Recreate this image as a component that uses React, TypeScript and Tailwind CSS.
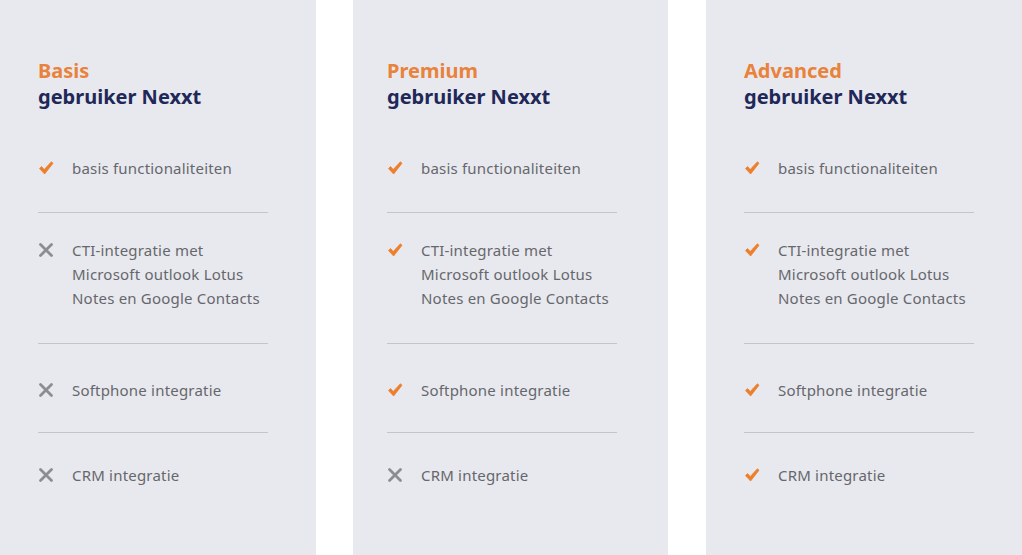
import React from "react";

type Plan = {
  name: string;
  pad: string;
  width: string;
  features: boolean[];
};

const features = [
  { label: "basis functionaliteiten", className: "pb-[32px]" },
  { label: "CTI-integratie met Microsoft outlook Lotus Notes en Google Contacts", className: "pt-[25px] pb-[33px]" },
  { label: "Softphone integratie", className: "pt-[34px] pb-[30px]" },
  { label: "CRM integratie", className: "pt-[30px] pb-[30px]" },
];

const plans: Plan[] = [
  { name: "Basis", pad: "pl-[38px]", width: "w-[316px]", features: [true, false, false, false] },
  { name: "Premium", pad: "pl-[34px]", width: "w-[315px]", features: [true, true, true, false] },
  { name: "Advanced", pad: "pl-[38px]", width: "w-[316px]", features: [true, true, true, true] },
];

// tapered tick, thicker at the bottom like the reference
const Check = () => (
  <svg width="16" height="16" viewBox="0 0 16 16" className="shrink-0 mt-[4px]">
    <path d="M1.5 8.6 L3.6 6.6 L6.2 9.6 L13.4 1.8 L15 3.3 L6.6 14 Z" fill="#ec7f2c" strokeLinejoin="round" stroke="#ec7f2c" strokeWidth="0.8" />
  </svg>
);

const Cross = () => (
  <svg width="16" height="16" viewBox="0 0 16 16" className="shrink-0 mt-[4px]">
    <path d="M2.5 2.5 L13.5 13.5 M13.5 2.5 L2.5 13.5" fill="none" stroke="#8c8d92" strokeWidth="2.8" strokeLinecap="round" />
  </svg>
);

function PlanCard({ plan }: { plan: Plan }) {
  return (
    <div className={`${plan.width} ${plan.pad} h-[555px] bg-[#e8e9ee] pt-[58px]`}>
      <div className="w-[230px]">
        <h2 className="text-[20px] leading-[26px] font-bold pb-[46px]">
          <span className="block text-[#e9823a]">{plan.name}</span>
          <span className="block text-[#1f2858]">gebruiker Nexxt</span>
        </h2>
        {features.map((f, i) => (
          <div
            key={f.label}
            className={`flex items-start ${f.className} ${i < features.length - 1 ? "border-b border-[#c4c5ca]" : ""}`}
          >
            {plan.features[i] ? <Check /> : <Cross />}
            <p className="ml-[18px] text-[15px] leading-[24px] text-[#66676c] tracking-[0.2px]">{f.label}</p>
          </div>
        ))}
      </div>
    </div>
  );
}

export default function App() {
  return (
    <div className="w-[1022px] h-[555px] bg-white flex overflow-hidden" style={{ fontFamily: '"Noto Sans", "Open Sans", sans-serif' }}>
      <PlanCard plan={plans[0]} />
      <div className="w-[37px] shrink-0" />
      <PlanCard plan={plans[1]} />
      <div className="w-[38px] shrink-0" />
      <PlanCard plan={plans[2]} />
    </div>
  );
}
